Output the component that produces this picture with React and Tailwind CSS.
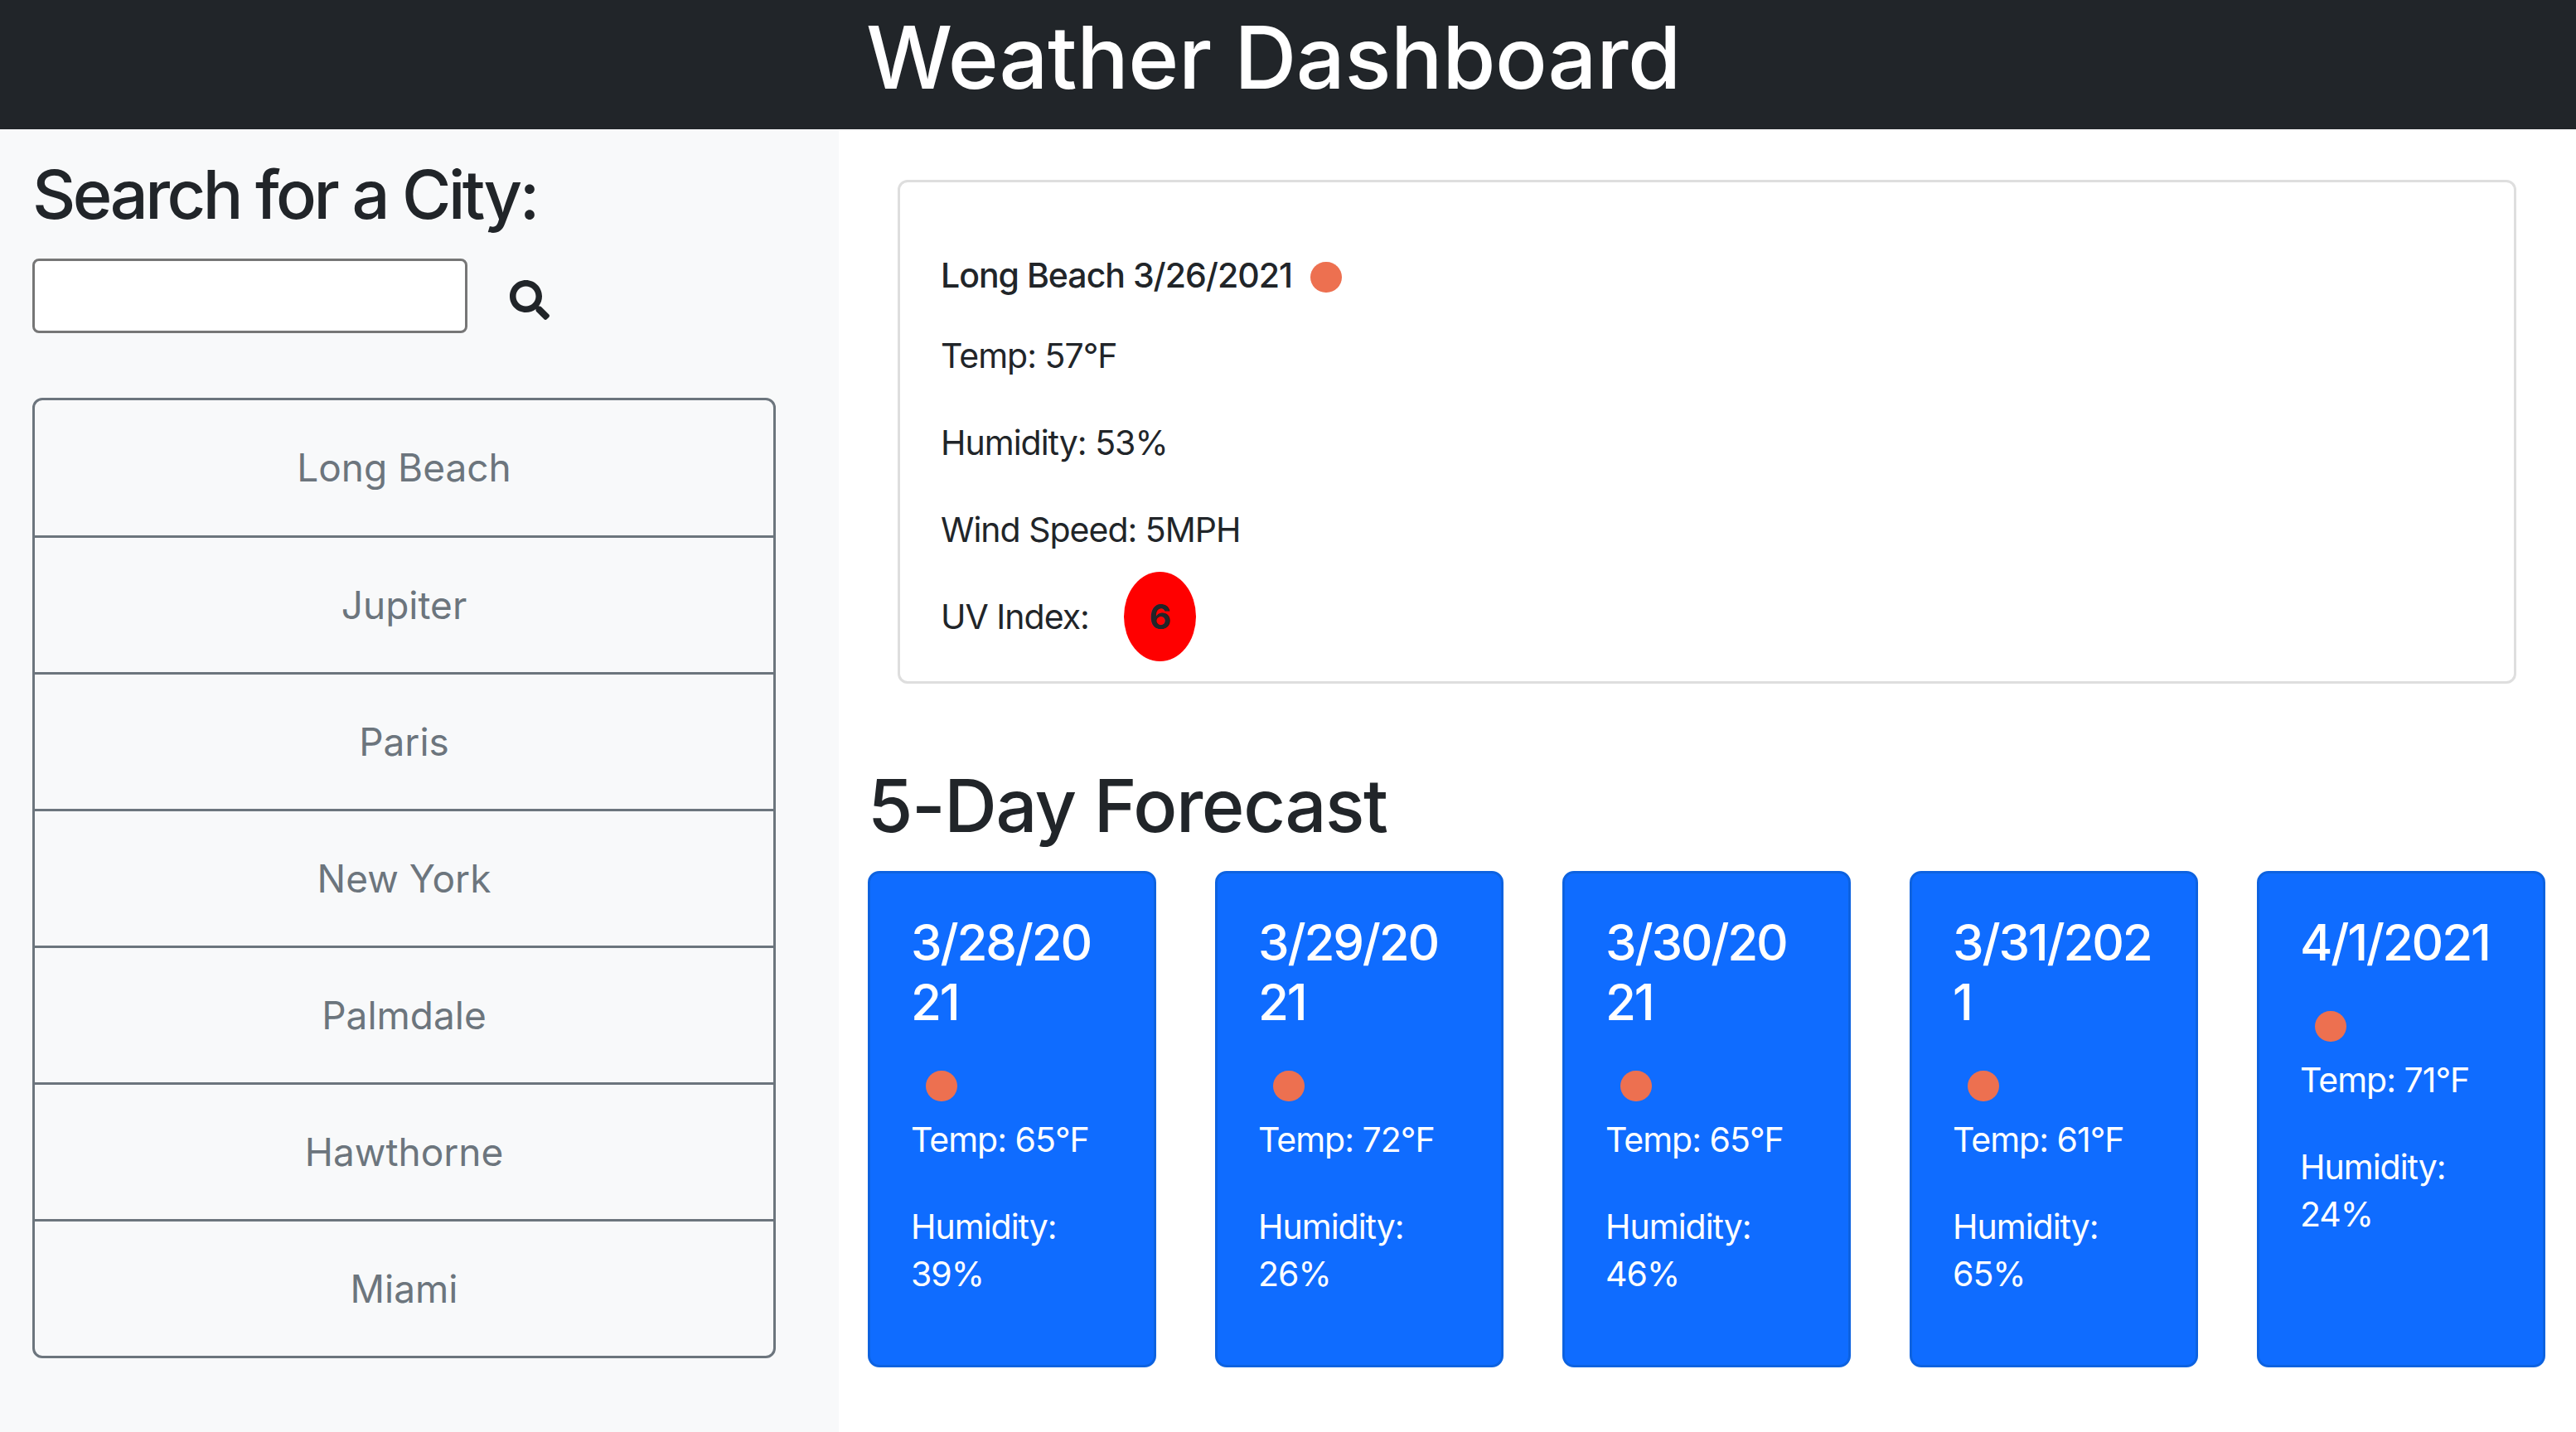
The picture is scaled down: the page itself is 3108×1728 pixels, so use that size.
import { FaSearch } from "react-icons/fa";

const cities = ["Long Beach", "Jupiter", "Paris", "New York", "Palmdale", "Hawthorne", "Miami"];

const forecast = [
  { date: "3/28/2021", temp: "65", humidity: "39" },
  { date: "3/29/2021", temp: "72", humidity: "26" },
  { date: "3/30/2021", temp: "65", humidity: "46" },
  { date: "3/31/2021", temp: "61", humidity: "65" },
  { date: "4/1/2021", temp: "71", humidity: "24" },
];

function Dot({ className = "" }) {
  return <span className={`block h-[37px] w-[38px] shrink-0 rounded-full bg-[#ed7050] ${className}`} />;
}

function Sidebar() {
  return (
    <aside className="w-[1012px] shrink-0 bg-[#f8f9fa] pl-[39px] pt-[31px]">
      <h2 className="text-[81px] leading-[97px] font-medium tracking-[-3.5px] text-[#212529]">Search for a City:</h2>
      <div className="mt-[28px] flex items-center">
        <input className="h-[90px] w-[525px] rounded-[8px] border-[3px] border-[#767676] bg-white" />
        <FaSearch className="ml-[51px] mt-[10px] text-[48px] text-[#212529]" />
      </div>
      <ul className="mt-[78px] w-[897px] overflow-hidden rounded-[12px] border-[3px] border-[#6c757d]">
        {cities.map((city, i) => (
          <li
            key={city}
            className={`flex items-center justify-center text-[46px] text-[#6c757d] ${i > 0 ? "h-[165px] border-t-[3px] border-[#6c757d]" : "h-[163px]"}`}
          >
            {city}
          </li>
        ))}
      </ul>
    </aside>
  );
}

function CurrentWeather() {
  return (
    <section className="ml-[36px] w-[1953px] rounded-[12px] border-[3px] border-[#dedede] pb-[24px] pl-[49px] pt-[84px] text-[41px] leading-[57px] tracking-[-1px] text-[#212529]">
      <div className="mb-[40px] flex items-center font-medium">
        Long Beach 3/26/2021
        <Dot className="ml-[22px] mt-[4px]" />
      </div>
      <p className="mb-[48px]">Temp: 57°F</p>
      <p className="mb-[48px]">Humidity: 53%</p>
      <p>Wind Speed: 5MPH</p>
      <div className="mt-[22px] flex items-center">
        UV Index:
        <span className="ml-[42px] flex h-[108px] w-[87px] items-center justify-center rounded-[50%] bg-[#ff0000] font-bold">
          6
        </span>
      </div>
    </section>
  );
}

function ForecastCard({ date, temp, humidity }) {
  return (
    <div className="h-[599px] w-[348px] rounded-[14px] border-[3px] border-[#0d62e0] bg-[#0f6cff] pl-[49px] pr-[50px] pt-[47px] text-white">
      <h5 className="text-[60px] leading-[72px] font-medium tracking-[-2.2px] break-all">{date}</h5>
      <Dot className="ml-[18px] mt-[47px]" />
      <p className="mt-[18px] text-[41px] leading-[57px] tracking-[-1px]">Temp: {temp}°F</p>
      <p className="mt-[48px] text-[41px] leading-[57px] tracking-[-1px]">Humidity: {humidity}%</p>
    </div>
  );
}

export default function App() {
  return (
    <div className="flex h-[1728px] flex-col bg-white font-['Inter',sans-serif]">
      <header className="h-[156px] shrink-0 bg-[#212529] pl-[1045px]">
        <h1 className="text-[104px] leading-[138px] font-medium tracking-[-0.4px] text-white">Weather Dashboard</h1>
      </header>
      <div className="flex flex-1">
        <Sidebar />
        <main className="flex-1 pl-[35px] pt-[61px]">
          <CurrentWeather />
          <h2 className="mt-[94px] text-[88px] leading-[106px] font-medium tracking-[-1.4px] text-[#212529]">5-Day Forecast</h2>
          <div className="mt-[26px] flex gap-[71px]">
            {forecast.map((day) => (
              <ForecastCard key={day.date} {...day} />
            ))}
          </div>
        </main>
      </div>
    </div>
  );
}
